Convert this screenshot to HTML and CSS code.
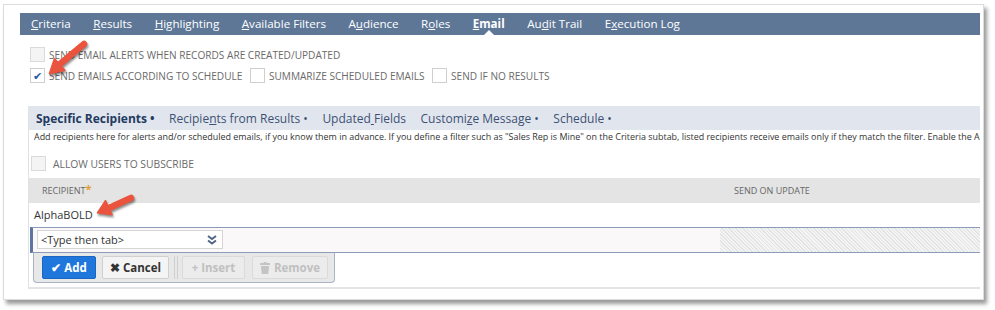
FILE: index.html
```html
<!DOCTYPE html>
<html lang="en">
<head>
  <meta charset="UTF-8" />
  <title>Saved Search - Email</title>
  <link rel="stylesheet" href="styles.css">
</head>
<body>

  <div class="panel">
    <div class="inner">

      <!-- Main tabs -->
      <nav class="tabs">
        <span class="tab"><u>C</u>riteria</span>
        <span class="tab"><u>R</u>esults</span>
        <span class="tab"><u>H</u>ighlighting</span>
        <span class="tab"><u>A</u>vailable Filters</span>
        <span class="tab">A<u>u</u>dience</span>
        <span class="tab">R<u>o</u>les</span>
        <span class="tab active"><u>E</u>mail</span>
        <span class="tab">Au<u>d</u>it Trail</span>
        <span class="tab">E<u>x</u>ecution Log</span>
      </nav>

      <!-- Email options -->
      <div class="options">
        <div class="opt-row">
          <label class="check"><span class="box disabled"></span>SEND EMAIL ALERTS WHEN RECORDS ARE CREATED/UPDATED</label>
        </div>
        <div class="opt-row">
          <label class="check"><span class="box checked">&#10004;</span>SEND EMAILS ACCORDING TO SCHEDULE</label>
          <label class="check"><span class="box"></span>SUMMARIZE SCHEDULED EMAILS</label>
          <label class="check"><span class="box"></span>SEND IF NO RESULTS</label>
        </div>
      </div>

      <!-- Sub tabs -->
      <div class="subpanel">
        <div class="subtabs">
          <span class="subtab active">S<u>p</u>ecific Recipients &bull;</span>
          <span class="subtab">Recipie<u>n</u>ts from Results &bull;</span>
          <span class="subtab">Updated<u> </u>Fields</span>
          <span class="subtab">Customi<u>z</u>e Message &bull;</span>
          <span class="subtab">Schedule &bull;</span>
        </div>
        <p class="help">Add recipients here for alerts and/or scheduled emails, if you know them in advance. If you define a filter such as "Sales Rep is Mine" on the Criteria subtab, listed recipients receive emails only if they match the filter. Enable the Allow Users to Subscribe box to let users add themselves.</p>
        <div class="subscribe">
          <label class="check"><span class="box disabled"></span>ALLOW USERS TO SUBSCRIBE</label>
        </div>

        <!-- Recipients list -->
        <div class="grid">
          <div class="grid-head">
            <span class="col-recipient">RECIPIENT<b class="req">*</b></span>
            <span class="col-update">SEND ON UPDATE</span>
          </div>
          <div class="grid-row">AlphaBOLD</div>
          <div class="edit-row">
            <div class="edit-cell">
              <div class="select">
                <span>&lt;Type then tab&gt;</span>
                <svg width="10" height="10" viewBox="0 0 10 10">
                  <path d="M1 1 L5 4 L9 1 M1 5.5 L5 8.5 L9 5.5" fill="none" stroke="#4f6487" stroke-width="2"/>
                </svg>
              </div>
            </div>
            <div class="hatch"></div>
          </div>
          <div class="buttons">
            <button class="btn primary">&#10004; Add</button>
            <button class="btn cancel">&#10006; Cancel</button>
            <span class="sep"></span>
            <button class="btn off insert">+ Insert</button>
            <button class="btn off remove">
              <svg width="10" height="12" viewBox="0 0 10 12">
                <rect x="0" y="1" width="10" height="2" fill="#c4c4c4"/>
                <rect x="3.5" y="0" width="3" height="1.5" fill="#c4c4c4"/>
                <path d="M1 4 H9 L8.3 12 H1.7 Z" fill="#c4c4c4"/>
              </svg>
              Remove</button>
          </div>
        </div>
      </div>

    </div>
  </div>

  <!-- Red annotation arrows -->
  <svg class="arrows" width="995" height="310" viewBox="0 0 995 310">
    <g fill="#ea533d" stroke="#ea533d">
      <line x1="84" y1="44" x2="60" y2="64" stroke-width="6.5" stroke-linecap="round"/>
      <polygon points="49,74 54.4,58 65.5,70.5" stroke-width="1" stroke-linejoin="round"/>
      <line x1="131" y1="198" x2="109" y2="208" stroke-width="6.5" stroke-linecap="round"/>
      <polygon points="97,213 105.5,200 112.5,215" stroke-width="1" stroke-linejoin="round"/>
    </g>
  </svg>

</body>
</html>
```

FILE: styles.css
```css
body {
  margin: 0;
  background-color: white;
  font-family: "Open Sans", "Liberation Sans", sans-serif;
  color: #333;
  width: 995px;
  height: 310px;
  overflow: hidden;
  position: relative;
}

.panel {
  margin: 4px 0 0 3px;
  width: 981px;
  height: 296px;
  box-sizing: border-box;
  border: 1px solid #dcdcdc;
  box-shadow: 3px 4px 4px rgba(0, 0, 0, 0.4);
  padding: 8px 0 0 16px;
  background-color: white;
}

.inner {
  width: 960px;
  overflow: hidden;
}

/* main tabs */
.tabs {
  display: flex;
  height: 22px;
  align-items: center;
  background-color: #5e7797;
}

.tab {
  color: white;
  font-size: 11.6px;
  padding: 0 11px;
  margin-right: 0.5px;
  white-space: nowrap;
  position: relative;
  line-height: 22px;
}

.tab.active {
  font-weight: bold;
}

.tab.active::after {
  content: "";
  position: absolute;
  left: 50%;
  bottom: 0;
  margin-left: -5px;
  border: 5px solid transparent;
  border-bottom-color: white;
  border-top: none;
}

/* checkboxes */
.options {
  padding: 9px 0 0 10px;
  height: 62px;
}

.opt-row {
  display: flex;
  align-items: center;
  height: 21px;
}

.check {
  display: flex;
  align-items: center;
  font-size: 10.1px;
  color: #6a6a6a;
  margin-right: 7.5px;
  white-space: nowrap;
}

.box {
  width: 13px;
  height: 13px;
  border: 1px solid #cfcfcf;
  background-color: white;
  margin-right: 4px;
  display: flex;
  align-items: center;
  justify-content: center;
  font-size: 11px;
  color: #1f5aa8;
}

.box.disabled {
  background-color: #f4f4f4;
  border-color: #dadada;
}

/* sub tabs */
.subpanel {
  margin-left: 8px;
  border-left: 1px solid #e1e1e1;
  border-bottom: 2px solid #e4e4e4;
  height: 181px;
}

.subtabs {
  display: flex;
  height: 24px;
  align-items: center;
  background-color: #e1e6ee;
  padding-left: 7px;
}

.subtab {
  font-size: 12px;
  color: #3e5173;
  margin-right: 14.5px;
  white-space: nowrap;
}

.subtab.active {
  font-weight: bold;
  color: #243a60;
}

.help {
  margin: 0;
  padding-left: 5px;
  font-size: 8.95px;
  color: #333;
  white-space: nowrap;
  line-height: 14px;
}

.subscribe {
  padding: 12px 0 0 2px;
  height: 22px;
}

.subscribe .check {
  gap: 3px;
  font-size: 10.3px;
}

/* recipients grid */
.grid-head {
  display: flex;
  align-items: center;
  height: 25px;
  background-color: #e4e4e4;
  font-size: 9px;
  color: #666;
}

.col-recipient {
  width: 692px;
  padding-left: 13px;
}

.req {
  color: #e0a030;
  font-size: 11px;
  vertical-align: top;
  line-height: 9px;
}

.grid-row {
  height: 24px;
  line-height: 24px;
  padding-left: 5px;
  font-size: 11px;
  color: #333;
}

.edit-row {
  display: flex;
  height: 24px;
  margin-left: 1px;
  border-top: 1px solid #8c9bb6;
  border-bottom: 1px solid #8c9bb6;
  border-left: 3px solid #5b76a2;
  background-color: #faf8f8;
}

.edit-cell {
  width: 687px;
  box-sizing: border-box;
  padding: 2px 0 0 4px;
}

.select {
  width: 186px;
  height: 19px;
  box-sizing: border-box;
  border: 1px solid #d6d6d6;
  background-color: white;
  display: flex;
  align-items: center;
  justify-content: space-between;
  padding: 0 5px 0 3px;
  font-size: 11px;
  color: #333;
}

.hatch {
  flex: 1;
  background: repeating-linear-gradient(45deg, #e3e3e3 0 1px, #f4f4f4 1px 2.5px);
}

.buttons {
  display: flex;
  align-items: center;
  width: 302px;
  height: 30px;
  box-sizing: border-box;
  margin-left: 4px;
  padding: 0 0 0 8px;
  background-color: #e8e8e8;
  border: 1px solid #a9b4c6;
  border-top: none;
  border-radius: 0 0 4px 4px;
}

.btn {
  flex-shrink: 0;
  height: 23px;
  padding: 0;
  border: 1px solid #d0d0d0;
  border-radius: 2px;
  background-color: #f4f4f4;
  font-family: "Open Sans", "Liberation Sans", sans-serif;
  font-size: 11.5px;
  font-weight: bold;
  color: #333;
  white-space: nowrap;
  display: flex;
  align-items: center;
  justify-content: center;
  gap: 4px;
}

.btn.primary {
  background-color: #1f77dc;
  border-color: #1b66c0;
  color: white;
  width: 54px;
}

.btn.cancel {
  width: 67px;
  margin-left: 6px;
}

.btn.insert {
  width: 63px;
  margin-left: 4px;
}

.btn.remove {
  width: 76px;
  margin-left: 7px;
}

.btn.off {
  color: #c0c0c0;
  background-color: #ececec;
  border-color: #dadada;
}

.sep {
  width: 2px;
  height: 23px;
  margin-left: 5px;
  border-left: 1px solid #cfcfcf;
  border-right: 1px solid #cfcfcf;
}

/* annotations */
.arrows {
  position: absolute;
  left: 0;
  top: 0;
  pointer-events: none;
  filter: drop-shadow(1px 2px 1px rgba(0, 0, 0, 0.45));
}
```
